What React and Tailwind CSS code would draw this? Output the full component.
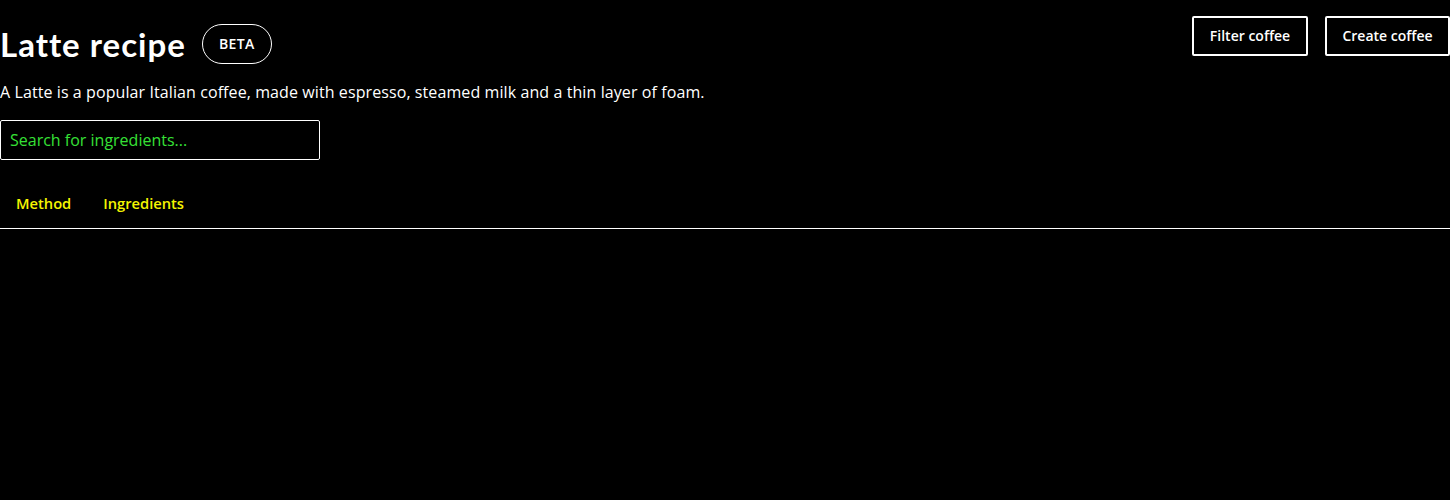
import { useState } from 'react';

export default function App() {
    const [query, setQuery] = useState('');
    const [tab, setTab] = useState('method');

    return (
        <div className="min-h-screen bg-black text-white" style={{ fontFamily: '"Open Sans", sans-serif' }}>
            <div className="flex items-start justify-between">
                <div className="flex items-center gap-4 pt-6">
                    <h1 className="text-[33px] font-bold leading-10 tracking-[1px]" style={{ fontFamily: 'Lato, sans-serif' }}>Latte recipe</h1>
                    <span className="flex h-10 w-[70px] items-center justify-center rounded-full border border-white text-sm font-semibold tracking-wide">
                        BETA
                    </span>
                </div>
                <div className="flex gap-[17px] pt-4">
                    <button className="h-10 w-[116px] rounded-[2px] border-2 border-white text-sm font-semibold">Filter coffee</button>
                    <button className="h-10 w-[125px] rounded-[2px] border-2 border-white text-sm font-semibold">Create coffee</button>
                </div>
            </div>

            <p className="mt-[16px] text-base leading-6 tracking-[0.09px]">
                A Latte is a popular Italian coffee, made with espresso, steamed milk and a thin layer of foam.
            </p>

            <input
                value={query}
                onChange={e => setQuery(e.target.value)}
                placeholder="Search for ingredients..."
                className="mt-[16px] block h-10 w-80 rounded-[2px] border border-white bg-black px-[9px] text-base text-[#36e036] placeholder:text-[#36e036] outline-none"
            />

            <div className="mt-5 flex border-b border-white">
                {[['method', 'Method'], ['ingredients', 'Ingredients']].map(([id, label]) => (
                    <button
                        key={id}
                        onClick={() => setTab(id)}
                        className="px-4 pt-3 pb-[14px] text-[14.7px] font-semibold text-[#f5f500]"
                    >
                        {label}
                    </button>
                ))}
            </div>
        </div>
    );
}
